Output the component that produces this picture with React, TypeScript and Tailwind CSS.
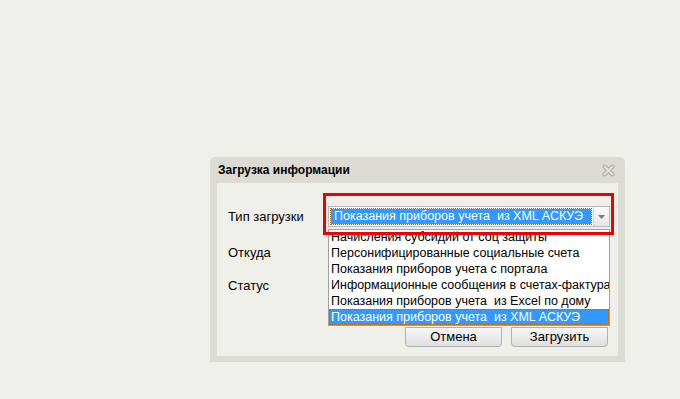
import React from 'react';

const options = [
  'Начисления субсидий от соц защиты',
  'Персонифицированные социальные счета',
  'Показания приборов учета с портала',
  'Информационные сообщения в счетах-фактурах',
  'Показания приборов учета  из Excel по дому',
  'Показания приборов учета  из XML АСКУЭ',
];

function Field({ label }: { label: string }) {
  return (
    <div className="flex items-center h-[21px]">
      <div className="w-[100px] pl-[11px] text-[13px] text-black">{label}</div>
    </div>
  );
}

function Button({ children }: { children: React.ReactNode }) {
  return (
    <div className="w-[97px] h-[20px] flex items-center justify-center rounded-b-[4px] border border-[#b0b0b0] bg-gradient-to-b from-[#f7f7f7] to-[#e0e0e0] text-[13px] text-black">
      {children}
    </div>
  );
}

export default function App() {
  return (
    <div
      className="w-[680px] h-[399px] bg-[#f0f0eb] pt-[157px] pl-[210px] overflow-hidden"
      style={{ fontFamily: '"Liberation Sans", Arial, sans-serif' }}
    >
      {/* window */}
      <div className="w-[415px] h-[205px] bg-[#dcdcd5] rounded-t-[5px] px-[7px] pb-[6px] flex flex-col">
        <div className="h-[26px] flex items-center justify-between pl-[1px] pr-[3px]">
          <span className="text-[12px] font-bold text-black">Загрузка информации</span>
          <svg width="13" height="13" viewBox="0 0 13 13">
            <path d="M2.5 2.5 L10.5 10.5 M10.5 2.5 L2.5 10.5" stroke="#a9a9a3" strokeWidth="4" strokeLinecap="round" />
            <path d="M2.5 2.5 L10.5 10.5 M10.5 2.5 L2.5 10.5" stroke="#e4e4df" strokeWidth="2" strokeLinecap="round" />
          </svg>
        </div>

        <div className="flex-1 bg-[#f0f0ea] flex flex-col relative">
          <div className="pt-[23px] flex items-center">
            <div className="w-[111px] pl-[11px] text-[13px] text-black">Тип загрузки</div>
            <div className="relative w-[282px] h-[21px] flex border border-[#b5b8c8] bg-white">
              <div className="flex-1 p-[2px] flex min-w-0">
                <div className="flex-1 bg-[#3399ff] text-white text-[12.5px] leading-[15px] pl-[3px] whitespace-pre overflow-hidden outline-1 outline-dotted outline-[#c06000]">
                  Показания приборов учета  из XML АСКУЭ
                </div>
              </div>
              <div className="w-[16px] border-l border-[#d4d4d4] bg-gradient-to-b from-[#fbfbfb] to-[#e6e6e6] flex items-center justify-center">
                <svg width="7" height="4" viewBox="0 0 7 4">
                  <path d="M0 0 H7 L3.5 4 Z" fill="#7a7a7a" />
                </svg>
              </div>

              {/* dropdown list */}
              <div className="absolute left-[-1px] top-[22px] w-[282px] h-[97px] bg-white border border-[#a0a0a0] flex flex-col justify-end overflow-hidden">
                {options.map((o, i) => (
                  <div
                    key={o}
                    className={
                      i === options.length - 1
                        ? 'h-[16px] pl-[2px] text-[12.5px] leading-[16px] whitespace-pre bg-[#3399ff] text-white outline-1 outline-dotted outline-[#c06000] -outline-offset-1'
                        : 'h-[16px] pl-[2px] text-[12.5px] leading-[16px] whitespace-pre text-black'
                    }
                  >
                    {o}
                  </div>
                ))}
              </div>

              {/* highlight frame */}
              <div className="absolute left-[-6px] top-[-14px] w-[291px] h-[42px] border-[3px] border-[#ee0000] pointer-events-none" />
            </div>
          </div>

          <div className="mt-[15px]">
            <Field label="Откуда" />
          </div>
          <div className="mt-[12px]">
            <Field label="Статус" />
          </div>

          <div className="mt-auto mb-[9px] flex justify-end gap-[9px] pr-[10px]">
            <Button>Отмена</Button>
            <Button>Загрузить</Button>
          </div>
        </div>
      </div>
    </div>
  );
}
